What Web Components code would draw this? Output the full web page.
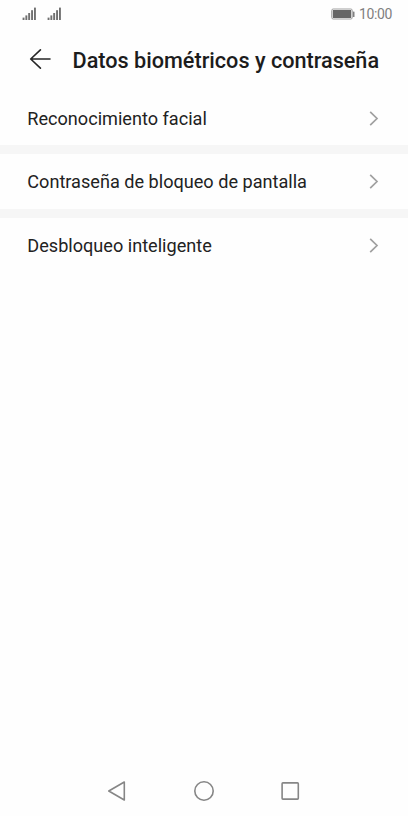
<!DOCTYPE html>
<html lang="es">
  <head>
    <meta charset="utf-8">
    <title>Datos biométricos y contraseña</title>
    <style>
      html, body {
        margin: 0;
        height: 100%;
        background: #fefefe;
        overflow: hidden;
      }
    </style>
  </head>
  <body>
    <settings-screen></settings-screen>
    <script>
      // Barras de cobertura de una SIM
      class SignalIcon extends HTMLElement {
        constructor() {
          super();
          this.attachShadow({ mode: "open" });
          this.shadowRoot.innerHTML = `
          <style>
            :host { display: block; width: 14px; height: 14px; }
            svg { display: block; }
          </style>
          <svg width="14" height="14" fill="#707070">
            <rect x="0.6" y="10.6" width="1.9" height="2.4"/>
            <rect x="3.4" y="8.4" width="1.9" height="4.6"/>
            <rect x="6.2" y="6" width="1.9" height="7"/>
            <rect x="9.1" y="3.2" width="1.9" height="9.8"/>
            <rect x="12" y="0.6" width="1.9" height="12.4"/>
          </svg>
        `;
        }
      }

      // Barra de estado
      class StatusBar extends HTMLElement {
        constructor() {
          super();
          this.attachShadow({ mode: "open" });
          this.shadowRoot.innerHTML = `
          <style>
            :host {
              display: flex;
              align-items: center;
              box-sizing: border-box;
              height: 28px;
              padding: 0 16px 0 22px;
              color: #808080;
              font-size: 14px;
            }
            signal-icon { margin-right: 10.5px; }
            svg { margin: 0 3.5px 0 auto; }
            span { letter-spacing: -0.35px; }
          </style>
          <signal-icon></signal-icon>
          <signal-icon></signal-icon>
          <svg width="24" height="12">
            <rect x="0.7" y="1" width="20.6" height="10" rx="1.5" fill="#fefefe" stroke="#a0a0a0"/>
            <rect x="1.8" y="2" width="18.4" height="8" fill="#666"/>
            <rect x="22" y="3.5" width="1.5" height="5.5" rx="0.5" fill="#808080"/>
          </svg>
          <span><slot></slot></span>
        `;
        }
      }

      // Cabecera con flecha de retroceso y título
      class TitleBar extends HTMLElement {
        constructor() {
          super();
          this.attachShadow({ mode: "open" });
          this.shadowRoot.innerHTML = `
          <style>
            :host {
              display: flex;
              align-items: center;
              box-sizing: border-box;
              height: 63px;
              padding: 1px 0 0 29px;
              color: #1c1c1c;
            }
            svg { margin-right: 21.5px; flex: none; }
            h1 {
              margin: 0;
              padding-top: 2px;
              font-size: 21.65px;
              line-height: 26px;
              font-weight: 500;
              white-space: nowrap;
            }
          </style>
          <svg width="22" height="22" fill="none" stroke="#262626" stroke-width="1.6" stroke-linecap="round" stroke-linejoin="round">
            <path d="M11.4 0.9L1.7 10L11.4 19.2M1.9 10H21"/>
          </svg>
          <h1><slot></slot></h1>
        `;
        }
      }

      // Fila de ajustes
      class SettingsRow extends HTMLElement {
        constructor() {
          super();
          this.attachShadow({ mode: "open" });
          this.shadowRoot.innerHTML = `
          <style>
            :host {
              display: flex;
              align-items: center;
              justify-content: space-between;
              box-sizing: border-box;
              height: 54.5px;
              padding: 1px 29px 0 27.3px;
              color: #222;
              font-size: 18.13px;
              line-height: 22px;
              white-space: nowrap;
            }
            svg { flex: none; }
          </style>
          <span><slot></slot></span>
          <svg width="10" height="16" fill="none" stroke="#a0a0a0" stroke-width="1.7">
            <path d="M1.2 0.8L8 7.5L1.2 14.2"/>
          </svg>
        `;
        }
      }

      // Barra de navegación del sistema
      class NavBar extends HTMLElement {
        constructor() {
          super();
          this.attachShadow({ mode: "open" });
          this.shadowRoot.innerHTML = `
          <style>
            :host {
              display: flex;
              align-items: center;
              justify-content: space-between;
              box-sizing: border-box;
              height: 50px;
              margin-top: auto;
              padding: 0 107px;
            }
            svg { fill: none; stroke: #868686; stroke-width: 1.6; stroke-linejoin: round; }
          </style>
          <svg width="20" height="22"><path d="M17.3 2L1.8 11L17.3 20Z"/></svg>
          <svg width="22" height="22"><circle cx="11" cy="11" r="9.2"/></svg>
          <svg width="20" height="22"><rect x="1.1" y="2.9" width="16.2" height="16.2" rx="0.8"/></svg>
        `;
        }
      }

      class SettingsScreen extends HTMLElement {
        constructor() {
          super();
          this.attachShadow({ mode: "open" });
          this.shadowRoot.innerHTML = `
          <style>
            :host {
              display: flex;
              flex-direction: column;
              height: 100vh;
              font-family: Roboto, sans-serif;
            }
            main {
              display: flex;
              flex-direction: column;
              gap: 9px;
              background: #f6f6f6;
            }
            settings-row { background: #fefefe; }
            /* la primera fila es algo más baja, pegada a la cabecera */
            settings-row:first-child { height: 54px; }
            settings-row:last-child { padding-top: 2px; }
          </style>
          <status-bar>10:00</status-bar>
          <title-bar>Datos biométricos y contraseña</title-bar>
          <main>
            <settings-row>Reconocimiento facial</settings-row>
            <settings-row>Contraseña de bloqueo de pantalla</settings-row>
            <settings-row>Desbloqueo inteligente</settings-row>
          </main>
          <nav-bar></nav-bar>
        `;
        }
      }

      customElements.define("signal-icon", SignalIcon);
      customElements.define("status-bar", StatusBar);
      customElements.define("title-bar", TitleBar);
      customElements.define("settings-row", SettingsRow);
      customElements.define("nav-bar", NavBar);
      customElements.define("settings-screen", SettingsScreen);
    </script>
  </body>
</html>
